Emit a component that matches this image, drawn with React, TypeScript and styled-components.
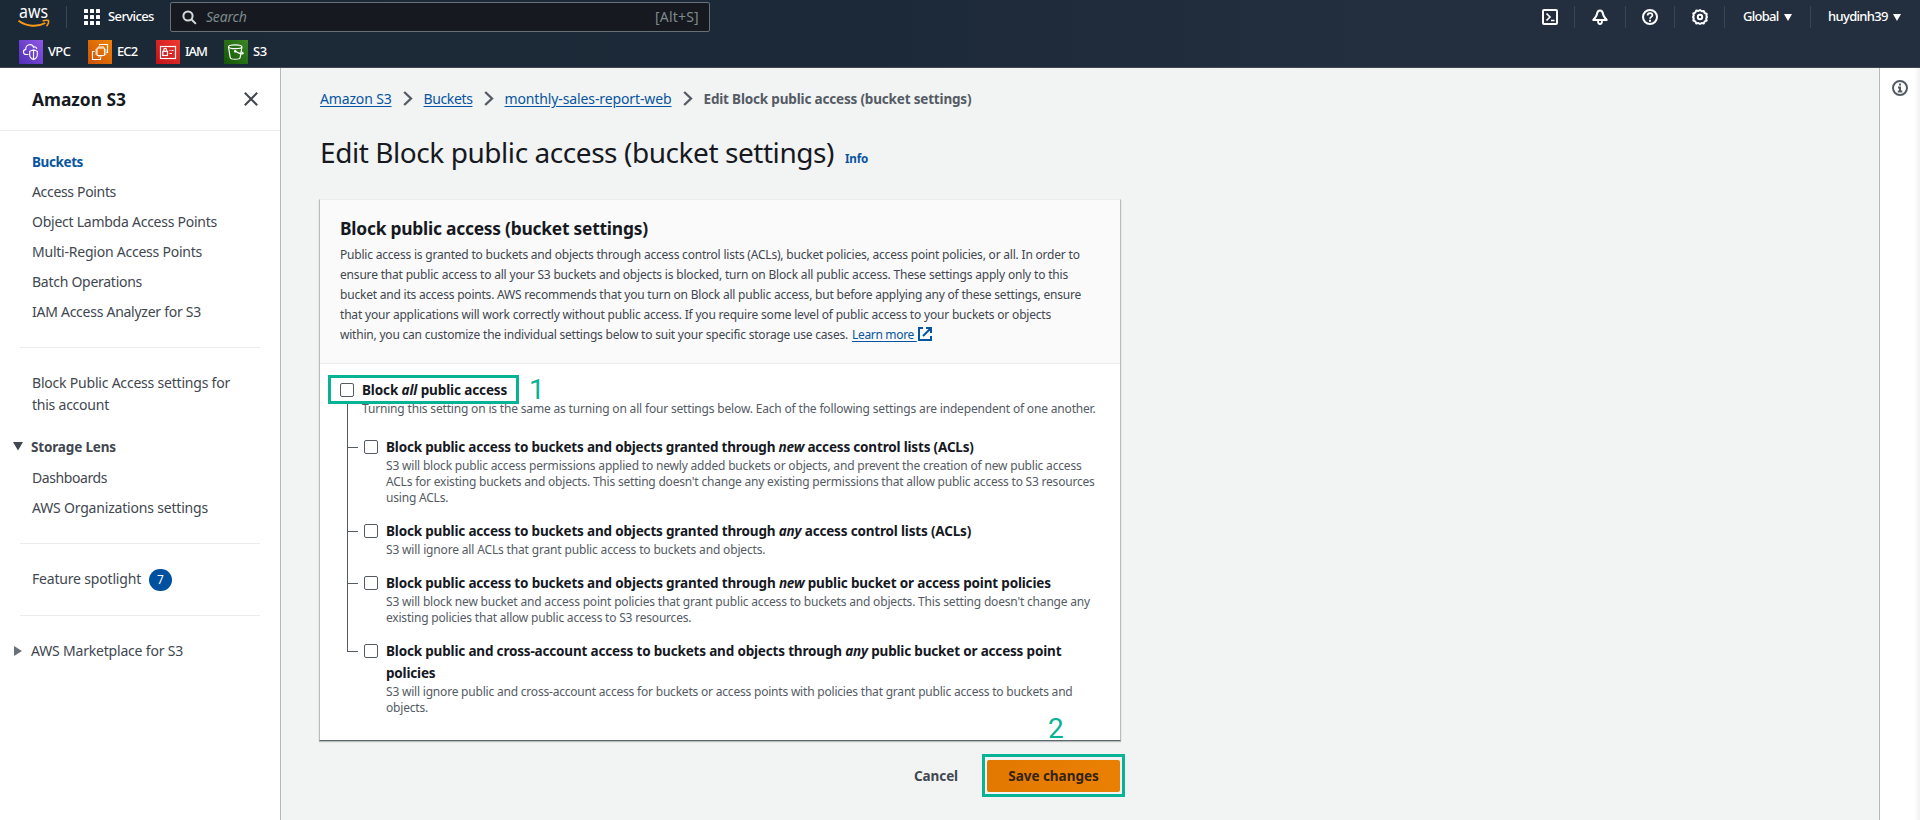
import React from 'react';
import styled, { createGlobalStyle } from 'styled-components';

const Global = createGlobalStyle`
  * { box-sizing: border-box; }
  html, body { margin: 0; padding: 0; }
  body { background: #f2f3f3; font-family: 'Noto Sans', 'Open Sans', sans-serif; color: #16191f; overflow: hidden; }
  svg { display: block; flex: none; }
`;

type TextProps = { $w?: number; $size?: number; $ls?: number; $bold?: boolean; $color?: string };
const Text = styled.span<TextProps>`
  display: inline-block;
  flex: none;
  width: ${(p) => (p.$w ? `${p.$w}px` : 'auto')};
  font-size: ${(p) => p.$size ?? (p.$bold ? 13.5 : 14)}px;
  font-weight: ${(p) => (p.$bold ? 700 : 400)};
  letter-spacing: ${(p) => p.$ls ?? 0}px;
  color: ${(p) => p.$color ?? 'inherit'};
  white-space: nowrap;
`;

const Page = styled.div`
  display: flex;
  flex-direction: column;
  width: 1920px;
  height: 820px;
`;

/* ---------- top navigation ---------- */
const Header = styled.header`
  height: 68px;
  flex: none;
  background: linear-gradient(90deg, #1b2836 0%, #1c2938 45%, #232f3e 72%);
  border-bottom: 1px solid #414750;
  color: #fff;
`;
const NavRow = styled.div`
  display: flex;
  align-items: center;
  height: 34px;
  padding-left: 18px;
`;
const NavText = styled(Text)`
  padding-bottom: 2px;
  font-size: 13px;
  font-weight: 500;
`;
const Divider = styled.i<{ $ml: number; $mr: number }>`
  flex: none;
  width: 1px;
  height: 22px;
  margin: 0 ${(p) => p.$mr}px 0 ${(p) => p.$ml}px;
  background: #3a4553;
`;
const Services = styled.div`
  display: flex;
  align-items: center;
  gap: 8px;
  width: 86px;
`;
const SearchBox = styled.div`
  display: flex;
  align-items: center;
  flex: none;
  width: 540px;
  height: 30px;
  padding: 0 10px 0 11px;
  background: #16191f;
  border: 1px solid #687078;
  border-radius: 2px;
  color: #7d8a8b;
`;
const SearchHint = styled(Text)`
  margin-left: 9px;
  padding-bottom: 1px;
  font-style: italic;
`;
const SearchKeys = styled(Text)`
  margin-left: auto;
  padding-bottom: 1px;
`;
const NavTools = styled.div`
  display: flex;
  align-items: center;
  margin-left: 832px;
`;
const Caret = styled.i`
  flex: none;
  width: 0;
  height: 0;
  margin-left: 6px;
  border: 4px solid transparent;
  border-top: 7px solid #fff;
  border-bottom: 0;
`;
const Favorites = styled.div`
  display: flex;
  align-items: center;
  height: 36px;
  padding-left: 19px;
`;
const Favorite = styled.div<{ $w: number }>`
  display: flex;
  align-items: center;
  gap: 5px;
  flex: none;
  width: ${(p) => p.$w}px;
`;

/* ---------- side navigation ---------- */
const Body = styled.div`
  display: flex;
  flex: 1;
`;
const Sidebar = styled.aside`
  width: 281px;
  flex: none;
  background: #fff;
  border-right: 1px solid #b3b9bb;
  color: #414750;
`;
const SideHeader = styled.div`
  display: flex;
  align-items: center;
  justify-content: space-between;
  height: 63px;
  padding: 0 22px 0 32px;
  border-bottom: 1px solid #eaeded;
`;
const SideList = styled.nav`
  display: flex;
  flex-direction: column;
  padding: 16px 20px 0;
`;
const SideItem = styled.div`
  display: flex;
  align-items: center;
  height: 30px;
  padding: 0 0 1px 12px;
`;
const SideParagraph = styled.div`
  display: flex;
  flex-direction: column;
  padding-left: 12px;
  line-height: 22px;
`;
const SideRule = styled.hr<{ $top: number; $bottom: number }>`
  width: 100%;
  height: 1px;
  border: 0;
  margin: ${(p) => p.$top}px 0 ${(p) => p.$bottom}px;
  background: #eaeded;
`;
const SideSection = styled.div<{ $top?: number }>`
  display: flex;
  align-items: center;
  height: 32px;
  margin: ${(p) => p.$top ?? 0}px 0 0 -7px;
  padding-bottom: 1px;
`;
const ArrowSlot = styled.span`
  display: flex;
  align-items: center;
  width: 18px;
`;
const Badge = styled.span`
  display: flex;
  align-items: center;
  justify-content: center;
  width: 23px;
  height: 22px;
  margin: 2px 0 0 8px;
  border-radius: 11px;
  background: #0050a0;
  color: #fff;
  font-size: 12px;
`;

/* ---------- content ---------- */
const Content = styled.main`
  display: flex;
  flex-direction: column;
  flex: 1;
  padding: 20px 0 0 39px;
`;
const Breadcrumb = styled.div`
  display: flex;
  align-items: center;
  height: 22px;
  padding-bottom: 1px;
  color: #545b64;
`;
const CrumbLink = styled(Text)`
  color: #0755a0;
  text-decoration: underline;
  text-underline-offset: 2px;
`;
const Chevron = styled.svg`
  margin: 0 11px;
`;
const TitleRow = styled.div`
  display: flex;
  align-items: baseline;
  height: 36px;
  margin: 24px 0 29px;
  line-height: 36px;
`;
const Heading = styled.h1`
  display: flex;
  margin: 0;
`;
const InfoLink = styled(Text)`
  margin-left: 11px;
  color: #0755a0;
`;
const Card = styled.section`
  display: flex;
  flex-direction: column;
  width: 802px;
  height: 542px;
  margin: 0 0 0 -1px;
  background: #fff;
  border: 1px solid #b8bdbe;
  border-top-color: #eaeded;
  border-bottom: 1px solid #5f666b;
  box-shadow: 0 1px 1px rgba(0, 28, 36, 0.25);
`;
const CardHeader = styled.div`
  height: 164px;
  flex: none;
  padding: 16px 20px 0;
  background: #fafafa;
  border-bottom: 1px solid #eaeded;
`;
const CardTitle = styled.h2`
  display: flex;
  margin: 0 0 3px;
  line-height: 25px;
`;
const CardText = styled.div`
  display: flex;
  flex-direction: column;
  color: #414750;
`;
const TextLine = styled.div`
  display: flex;
  align-items: center;
  height: 20px;
`;
const LearnMore = styled(Text)`
  margin-left: 4px;
  color: #0755a0;
  text-decoration: underline;
  text-underline-offset: 2px;
`;

const Settings = styled.div`
  display: flex;
  flex-direction: column;
  padding: 15px 0 0 20px;
`;
const Setting = styled.div`
  position: relative;
  display: grid;
  grid-template-columns: 14px 1fr;
  column-gap: 8px;
`;
const Checkbox = styled.span`
  width: 14px;
  height: 14px;
  margin-top: 4px;
  border: 1px solid #545b64;
  border-radius: 2px;
  background: #fff;
`;
const Label = styled.div`
  display: flex;
  flex-direction: column;
  line-height: 22px;
`;
const Hint = styled.div`
  display: flex;
  flex-direction: column;
  grid-column: 2;
  color: #545b64;
  line-height: 16px;
`;
const Tree = styled.div`
  display: flex;
  flex-direction: column;
  margin: 19px 0 0 7px;
`;
const Branch = styled.div<{ $h: number; $up: number }>`
  position: relative;
  height: ${(p) => p.$h}px;
  padding-left: 17px;
  &::before {
    content: '';
    position: absolute;
    left: 0;
    top: ${(p) => 10 - p.$up}px;
    width: 10px;
    height: ${(p) => p.$up + 1}px;
    border: solid #545b64;
    border-width: 0 0 1px 1px;
  }
`;
const Callout = styled.span<{ $l: number; $t: number; $w: number; $h: number }>`
  position: absolute;
  left: ${(p) => p.$l}px;
  top: ${(p) => p.$t}px;
  width: ${(p) => p.$w}px;
  height: ${(p) => p.$h}px;
  border: 3px solid #08b294;
`;
const Step = styled.span<{ $l: number; $t: number }>`
  position: absolute;
  left: ${(p) => p.$l}px;
  top: ${(p) => p.$t}px;
  font-family: Roboto, 'Liberation Sans', sans-serif;
  font-size: 28px;
  font-weight: 400;
  line-height: 32px;
  color: #08b294;
`;
const Actions = styled.div`
  display: flex;
  align-items: center;
  justify-content: flex-end;
  width: 800px;
  height: 32px;
  margin-top: 19px;
  color: #414750;
`;
const SaveButton = styled.button`
  position: relative;
  display: flex;
  align-items: center;
  justify-content: center;
  width: 133px;
  height: 32px;
  margin-left: 29px;
  padding: 0;
  border: 0;
  border-radius: 2px;
  background: linear-gradient(90deg, #e27800, #ea8003);
  color: #33230f;
  font-family: inherit;
`;
const Rail = styled.aside`
  display: flex;
  justify-content: center;
  width: 41px;
  flex: none;
  padding-top: 12px;
  background: linear-gradient(90deg, #fff 85%, #f1f1f1);
  border-left: 1px solid #b3b9bb;
`;

/* ---------- icons ---------- */
const AwsLogo = () => (
  <svg width="32" height="34" viewBox="0 0 32 34" overflow="visible">
    <text x="1" y="17.600" fontFamily="'Noto Sans', sans-serif" fontSize="18" textLength="29" lengthAdjust="spacingAndGlyphs" fill="#fff">aws</text>
    <path d="M.5 20.800C8.500 26.700 19.500 27.300 27.300 23" fill="none" stroke="#f79a1b" strokeWidth="1.900" />
    <path d="M24.600 21c2.200-.9 4.500-1 5.900-.5.500 1.900-.4 4-2 5.700" fill="none" stroke="#f79a1b" strokeWidth="1.500" />
  </svg>
);
const GridIcon = () => (
  <svg width="16" height="16" viewBox="0 0 16 16" fill="#fff">
    {[0, 6, 12].map((y) => [0, 6, 12].map((x) => <rect key={`${x}-${y}`} x={x} y={y} width="4" height="4" rx=".6" />))}
  </svg>
);
const SearchIcon = () => (
  <svg width="15" height="15" viewBox="0 0 15 15" fill="none" stroke="#d5dbdb" strokeWidth="2">
    <circle cx="6" cy="6" r="4.600" /><path d="M9.300 9.300l4.600 4.600" />
  </svg>
);
const TerminalIcon = () => (
  <svg width="16" height="16" viewBox="0 0 16 16" fill="none" stroke="#fff" strokeWidth="2">
    <rect x="1" y="1" width="14" height="14" rx="1" /><path d="M4.500 4.500L8 8l-3.500 3.500M9 11.500h3.500" strokeWidth="1.700" />
  </svg>
);
const BellIcon = () => (
  <svg width="16" height="16" viewBox="0 0 16 16" fill="none" stroke="#fff" strokeWidth="2">
    <path d="M8 1.400C6.300 1.400 5.300 2.600 5 4.800c-.3 2.200-.9 3-3.700 6.200h13.400C11.900 7.800 11.300 7 11 4.800 10.700 2.600 9.700 1.400 8 1.400z" strokeLinejoin="round" />
    <path d="M6 12c0 1.900.7 3 2 3s2-1.100 2-3" strokeWidth="1.800" />
  </svg>
);
const HelpIcon = () => (
  <svg width="16" height="16" viewBox="0 0 16 16" fill="none" stroke="#fff" strokeWidth="2">
    <circle cx="8" cy="8" r="7" />
    <path d="M5.600 6.500c0-1.500 1-2.400 2.400-2.400s2.400.9 2.400 2.100C10.400 7.900 8 7.800 8 9.800" strokeWidth="1.700" />
    <path d="M8 10.800v1.900" />
  </svg>
);
const GearIcon = () => (
  <svg width="16" height="16" viewBox="0 0 16 16" fill="none" stroke="#fff" strokeWidth="2">
    <path d="M8 1l1.700 1.300 2.100-.3.900 2 2 .9-.3 2L15 8l-.9 1.500.6 2-2 .9-.9 2-2.100-.4L8 15l-1.700-1-2.100.4-.9-2-2-.9.500-2L1 8l.8-1.500-.5-2 2-.9.900-2 2.100.4z" strokeLinejoin="round" />
    <circle cx="8" cy="8" r="2.200" />
  </svg>
);
const InfoIcon = () => (
  <svg width="16" height="16" viewBox="0 0 16 16" fill="none" stroke="#545b64" strokeWidth="2">
    <circle cx="8" cy="8" r="7" /><path d="M8 3.600v1.900M6 7.500h2v3.700M5.800 11.500h4.500" />
  </svg>
);
const ExternalIcon = () => (
  <svg width="14" height="14" viewBox="0 0 14 14" fill="none" stroke="#0755a0" strokeWidth="2">
    <path d="M5 1H1v12h12V9M8 1h5v5M13 1L5 9" />
  </svg>
);
const VpcIcon = () => (
  <svg width="24" height="24" viewBox="0 0 24 24" fill="none" stroke="#fff" strokeWidth="1.100">
    <defs><linearGradient id="vpc" x1="0" y1="1" x2="1" y2="0"><stop stopColor="#4f2eb5" /><stop offset="1" stopColor="#8e58e8" /></linearGradient></defs>
    <rect width="24" height="24" fill="url(#vpc)" stroke="none" />
    <path d="M9.500 14.500H7.200C3.800 14.500 3.400 10 6.800 9.400 6.500 4.300 13 3 14.600 7.300c1.600-1 3 0 3.200 1.600" />
    <path d="M14.500 9.800l3.800 1.500v3.600c0 2.300-1.500 3.600-3.800 4.700-2.300-1.100-3.800-2.400-3.800-4.700v-3.600zM14.500 10v9.500" />
  </svg>
);
const Ec2Icon = () => (
  <svg width="24" height="24" viewBox="0 0 24 24" fill="none" stroke="#fff" strokeWidth="1.100">
    <defs><linearGradient id="ec2" x1="0" y1="1" x2="1" y2="0"><stop stopColor="#c95307" /><stop offset="1" stopColor="#f08306" /></linearGradient></defs>
    <rect width="24" height="24" fill="url(#ec2)" stroke="none" />
    <rect x="9" y="8" width="7.500" height="7.500" rx=".8" />
    <path d="M11 8V6M13 8V6M15 8V6M11 15.500v2M13 15.500v2M9 10H7.200M9 12H7.200M9 14H7.200M16.500 10h2M16.500 12h2M16.500 14h2" strokeWidth=".9" />
    <path d="M11.500 5.500V4.500h8v8h-1M6.500 11.500h-2v8h8v-2" />
  </svg>
);
const IamIcon = () => (
  <svg width="24" height="24" viewBox="0 0 24 24" fill="none" stroke="#fff" strokeWidth="1.200">
    <defs><linearGradient id="iam" x1="0" y1="1" x2="1" y2="0"><stop stopColor="#c11218" /><stop offset="1" stopColor="#f0392f" /></linearGradient></defs>
    <rect width="24" height="24" fill="url(#iam)" stroke="none" />
    <rect x="4.500" y="6.500" width="15" height="12" />
    <rect x="6.800" y="11.300" width="4.700" height="4.200" /><path d="M7.800 11V9.800c0-1.800 2.700-1.800 2.700 0V11M13.500 10.500h1M15.500 10.500h2M13.500 13.500h2.500" />
  </svg>
);
const S3Icon = () => (
  <svg width="24" height="24" viewBox="0 0 24 24" fill="none" stroke="#fff" strokeWidth="1.200">
    <defs><linearGradient id="s3" x1="0" y1="1" x2="1" y2="0"><stop stopColor="#125607" /><stop offset="1" stopColor="#3b8624" /></linearGradient></defs>
    <rect width="24" height="24" fill="url(#s3)" stroke="none" />
    <ellipse cx="11.200" cy="6.800" rx="6.700" ry="1.900" />
    <path d="M4.500 7l1.700 10.500c.3 2.300 9.700 2.300 10 0L17.900 7M11.300 11.200c3 2 6 2.800 7.800 2.500.6-.6-.8-1.600-2-2" /><circle cx="11.200" cy="11.200" r=".7" />
  </svg>
);

const Next = () => (
  <Chevron width="10" height="15" viewBox="0 0 10 15" fill="none" stroke="#545b64" strokeWidth="2.300">
    <path d="M1.200 1L8 7.500 1.200 14" />
  </Chevron>
);

const sideLinks = [
  { text: 'Access Points', ls: -0.331 },
  { text: 'Object Lambda Access Points', ls: -0.25 },
  { text: 'Multi-Region Access Points', ls: -0.232 },
  { text: 'Batch Operations', ls: -0.269 },
  { text: 'IAM Access Analyzer for S3', ls: -0.264 },
];

const intro = [
  { text: 'Public access is granted to buckets and objects through access control lists (ACLs), bucket policies, access point policies, or all. In order to', ls: -0.205 },
  { text: 'ensure that public access to all your S3 buckets and objects is blocked, turn on Block all public access. These settings apply only to this', ls: -0.184 },
  { text: 'bucket and its access points. AWS recommends that you turn on Block all public access, but before applying any of these settings, ensure', ls: -0.209 },
  { text: 'that your applications will work correctly without public access. If you require some level of public access to your buckets or objects', ls: -0.192 },
];

type Option = { h: number; up: number; label: React.ReactNode[]; ls: number; hint: { text: string; ls: number }[] };
const options: Option[] = [
  {
    h: 84, up: 42, ls: -0.178,
    label: [<>Block public access to buckets and objects granted through <em>new</em> access control lists (ACLs)</>],
    hint: [
      { text: 'S3 will block public access permissions applied to newly added buckets or objects, and prevent the creation of new public access', ls: -0.188 },
      { text: "ACLs for existing buckets and objects. This setting doesn't change any existing permissions that allow public access to S3 resources", ls: -0.207 },
      { text: 'using ACLs.', ls: -0.2 },
    ],
  },
  {
    h: 52, up: 84, ls: -0.175,
    label: [<>Block public access to buckets and objects granted through <em>any</em> access control lists (ACLs)</>],
    hint: [{ text: 'S3 will ignore all ACLs that grant public access to buckets and objects.', ls: -0.158 }],
  },
  {
    h: 68, up: 52, ls: -0.173,
    label: [<>Block public access to buckets and objects granted through <em>new</em> public bucket or access point policies</>],
    hint: [
      { text: "S3 will block new bucket and access point policies that grant public access to buckets and objects. This setting doesn't change any", ls: -0.187 },
      { text: 'existing policies that allow public access to S3 resources.', ls: -0.2 },
    ],
  },
  {
    h: 80, up: 68, ls: -0.175,
    label: [<>Block public and cross-account access to buckets and objects through <em>any</em> public bucket or access point</>, <>policies</>],
    hint: [
      { text: 'S3 will ignore public and cross-account access for buckets or access points with policies that grant public access to buckets and', ls: -0.203 },
      { text: 'objects.', ls: -0.18 },
    ],
  },
];

export default function App() {
  return (
    <Page>
      <Global />
      <Header>
        <NavRow>
          <AwsLogo />
          <Divider $ml={16} $mr={17} />
          <Services>
            <GridIcon />
            <NavText $w={45} $ls={-0.6}>Services</NavText>
          </Services>
          <SearchBox>
            <SearchIcon />
            <SearchHint $w={42} $ls={-0.2}>Search</SearchHint>
            <SearchKeys $w={44} $ls={0.2}>[Alt+S]</SearchKeys>
          </SearchBox>
          <NavTools>
            <TerminalIcon />
            <Divider $ml={16} $mr={17} />
            <BellIcon />
            <Divider $ml={17} $mr={16} />
            <HelpIcon />
            <Divider $ml={16} $mr={17} />
            <GearIcon />
            <Divider $ml={16} $mr={18} />
            <NavText $w={35} $ls={-0.72}>Global</NavText>
            <Caret />
            <Divider $ml={18} $mr={17} />
            <NavText $w={59} $ls={-0.68}>huydinh39</NavText>
            <Caret />
          </NavTools>
        </NavRow>
        <Favorites>
          <Favorite $w={69}><VpcIcon /><NavText $ls={-0.65}>VPC</NavText></Favorite>
          <Favorite $w={68}><Ec2Icon /><NavText $ls={-0.9}>EC2</NavText></Favorite>
          <Favorite $w={68}><IamIcon /><NavText $ls={-1.1}>IAM</NavText></Favorite>
          <Favorite $w={60}><S3Icon /><NavText $ls={-0.4}>S3</NavText></Favorite>
        </Favorites>
      </Header>
      <Body>
        <Sidebar>
          <SideHeader>
            <Text $w={94} $size={17.4} $ls={-0.03} $bold $color="#16191f">Amazon S3</Text>
            <svg width="14" height="14" viewBox="0 0 14 14" stroke="#414750" strokeWidth="2"><path d="M.8.8l12.400 12.400M13.200.8L.8 13.200" /></svg>
          </SideHeader>
          <SideList>
            <SideItem><Text $ls={-0.4} $bold $color="#0755a0">Buckets</Text></SideItem>
            {sideLinks.map((l) => <SideItem key={l.text}><Text $ls={l.ls}>{l.text}</Text></SideItem>)}
            <SideRule $top={20} $bottom={24} />
            <SideParagraph>
              <Text $ls={-0.208}>Block Public Access settings for</Text>
              <Text $ls={-0.232}>this account</Text>
            </SideParagraph>
            <SideSection $top={15}>
              <ArrowSlot><svg width="10" height="9" viewBox="0 0 10 9" fill="#414750"><path d="M0 0h10L5 8.500z" /></svg></ArrowSlot>
              <Text $ls={-0.16} $bold>Storage Lens</Text>
            </SideSection>
            <SideItem><Text $ls={-0.418}>Dashboards</Text></SideItem>
            <SideItem><Text $ls={-0.188}>AWS Organizations settings</Text></SideItem>
            <SideRule $top={20} $bottom={20} />
            <SideItem><Text $w={109} $ls={-0.185}>Feature spotlight</Text><Badge>7</Badge></SideItem>
            <SideRule $top={21} $bottom={19} />
            <SideSection>
              <ArrowSlot><svg width="10" height="10" viewBox="0 0 10 10" fill="#687078"><path d="M1 0v10l8-5z" /></svg></ArrowSlot>
              <Text $ls={-0.192}>AWS Marketplace for S3</Text>
            </SideSection>
          </SideList>
        </Sidebar>
        <Content>
          <Breadcrumb>
            <CrumbLink $w={71.5} $ls={-0.158}>Amazon S3</CrumbLink>
            <Next />
            <CrumbLink $w={49} $ls={-0.372}>Buckets</CrumbLink>
            <Next />
            <CrumbLink $w={167} $ls={-0.116}>monthly-sales-report-web</CrumbLink>
            <Next />
            <Text $w={268} $ls={-0.175} $bold>Edit Block public access (bucket settings)</Text>
          </Breadcrumb>
          <TitleRow>
            <Heading><Text $w={514} $size={28} $ls={-0.436}>Edit Block public access (bucket settings)</Text></Heading>
            <InfoLink $w={23} $size={11.6} $ls={-0.2} $bold>Info</InfoLink>
          </TitleRow>
          <Card>
            <CardHeader>
              <CardTitle><Text $w={308} $size={17.4} $ls={-0.235} $bold>Block public access (bucket settings)</Text></CardTitle>
              <CardText>
                {intro.map((l) => <TextLine key={l.text}><Text $size={12} $ls={l.ls}>{l.text}</Text></TextLine>)}
                <TextLine>
                  <Text $w={508} $size={12} $ls={-0.208}>within, you can customize the individual settings below to suit your specific storage use cases.</Text>
                  <LearnMore $w={66} $size={12} $ls={-0.324}>Learn more&nbsp;</LearnMore>
                  <ExternalIcon />
                </TextLine>
              </CardText>
            </CardHeader>
            <Settings>
              <Setting>
                <Checkbox />
                <Label><Text $ls={-0.12} $bold>Block <em>all</em> public access</Text></Label>
                <Hint><Text $size={12} $ls={-0.174}>Turning this setting on is the same as turning on all four settings below. Each of the following settings are independent of one another.</Text></Hint>
                <Callout $l={-12} $t={-4} $w={191} $h={29} />
                <Step $l={189} $t={-5}>1</Step>
              </Setting>
              <Tree>
                {options.map((o, i) => (
                  <Branch key={i} $h={o.h} $up={o.up}>
                    <Setting>
                      <Checkbox />
                      <Label>{o.label.map((l, n) => <Text key={n} $ls={o.ls} $bold>{l}</Text>)}</Label>
                      <Hint>{o.hint.map((h) => <Text key={h.text} $size={12} $ls={h.ls}>{h.text}</Text>)}</Hint>
                    </Setting>
                  </Branch>
                ))}
              </Tree>
            </Settings>
          </Card>
          <Actions>
            <Text $w={44} $ls={-0.09} $bold>Cancel</Text>
            <SaveButton>
              <Text $w={91} $ls={-0.02} $bold>Save changes</Text>
              <Callout $l={-5} $t={-6} $w={143} $h={43} />
              <Step $l={61} $t={-47}>2</Step>
            </SaveButton>
          </Actions>
        </Content>
        <Rail><InfoIcon /></Rail>
      </Body>
    </Page>
  );
}
